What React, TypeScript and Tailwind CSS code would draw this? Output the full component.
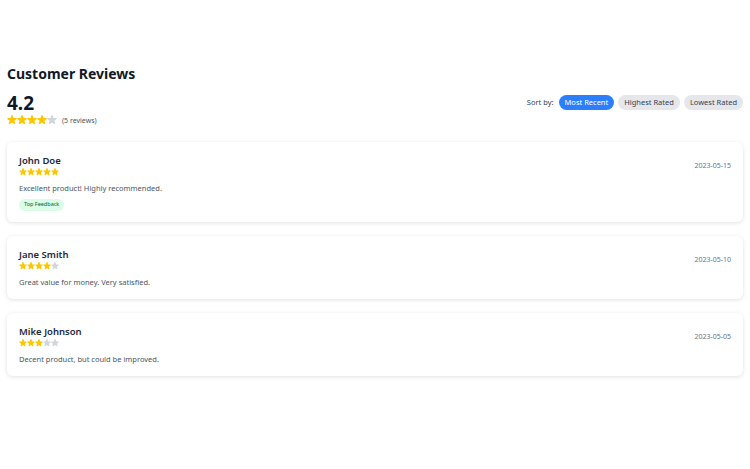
import React from 'react';

type Review = {
  id: number;
  name: string;
  rating: number;
  date: string;
  text: string;
  top?: boolean;
};

const reviews: Review[] = [
  { id: 1, name: 'John Doe', rating: 5, date: '2023-05-15', text: 'Excellent product! Highly recommended.', top: true },
  { id: 2, name: 'Jane Smith', rating: 4, date: '2023-05-10', text: 'Great value for money. Very satisfied.' },
  { id: 3, name: 'Mike Johnson', rating: 3, date: '2023-05-05', text: 'Decent product, but could be improved.' },
];

const Star = ({ filled, size }: { filled: boolean; size: number }) => (
  <svg width={size} height={size} viewBox="2.2 2.2 15.6 15.6" className={filled ? 'text-yellow-400' : 'text-gray-300'}>
    <path
      fill="currentColor"
      d="M9.05 2.93c.3-.92 1.6-.92 1.9 0l1.07 3.29a1 1 0 0 0 .95.69h3.46c.97 0 1.37 1.24.59 1.81l-2.8 2.03a1 1 0 0 0-.36 1.12l1.07 3.29c.3.92-.76 1.69-1.54 1.12l-2.8-2.03a1 1 0 0 0-1.18 0l-2.8 2.03c-.78.57-1.83-.2-1.54-1.12l1.07-3.29a1 1 0 0 0-.36-1.12L2.98 8.72c-.78-.57-.38-1.81.59-1.81h3.46a1 1 0 0 0 .95-.69l1.07-3.29z"
    />
  </svg>
);

const Stars = ({ rating, size }: { rating: number; size: number }) => (
  <div className="flex items-center">
    {[1, 2, 3, 4, 5].map(i => (
      <Star key={i} filled={i <= rating} size={size} />
    ))}
  </div>
);

const App: React.FC = () => {
  return (
    <div className="min-h-screen bg-white text-gray-900" style={{ fontFamily: '"Noto Sans", "Open Sans", sans-serif' }}>
      <div className="px-[7px] pt-[64px]">
        <h2 className="text-[14px] leading-[20px] font-bold mb-[8px]">Customer Reviews</h2>

        {/* Summary + sort */}
        <div className="flex justify-between items-start mb-[16px]">
          <div>
            <div className="text-[19px] leading-[22px] font-bold">4.2</div>
            <div className="flex items-center h-[12px]">
              <Stars rating={4} size={10} />
              <span className="ml-[5px] text-[7px] leading-none text-gray-600">(5 reviews)</span>
            </div>
          </div>
          <div className="flex items-center gap-[4px] mt-[3px]">
            <span className="text-[7.5px] leading-none text-gray-700 mr-[1px]">Sort by:</span>
            <button className="h-[15px] px-[6px] rounded-full bg-blue-500 text-white text-[7.5px] leading-none">Most Recent</button>
            <button className="h-[15px] px-[6px] rounded-full bg-gray-200 text-gray-700 text-[7.5px] leading-none">Highest Rated</button>
            <button className="h-[15px] px-[6px] rounded-full bg-gray-200 text-gray-700 text-[7.5px] leading-none">Lowest Rated</button>
          </div>
        </div>

        {/* Review list */}
        <div className="flex flex-col gap-[14px]">
          {reviews.map(r => (
            <div key={r.id} className="bg-white rounded-md shadow-[0_1px_4px_rgba(0,0,0,0.12)] px-[12px] pt-[12px] pb-[11px]">
              <div className="flex justify-between items-center">
                <div>
                  <div className="text-[9.5px] leading-[13px] font-semibold text-gray-800">{r.name}</div>
                  <div className="h-[9px] flex items-center">
                    <Stars rating={r.rating} size={8} />
                  </div>
                </div>
                <span className="text-[7px] leading-none text-gray-500">{r.date}</span>
              </div>
              <p className="mt-[7px] text-[7.5px] leading-[11px] text-gray-600">{r.text}</p>
              {r.top && (
                <div className="mt-[5px] flex">
                  <span className="inline-flex items-center h-[12px] px-[5px] rounded-full bg-green-100 text-green-800 text-[5.5px] leading-none">
                    Top Feedback
                  </span>
                </div>
              )}
            </div>
          ))}
        </div>
      </div>
    </div>
  );
};

export default App;
